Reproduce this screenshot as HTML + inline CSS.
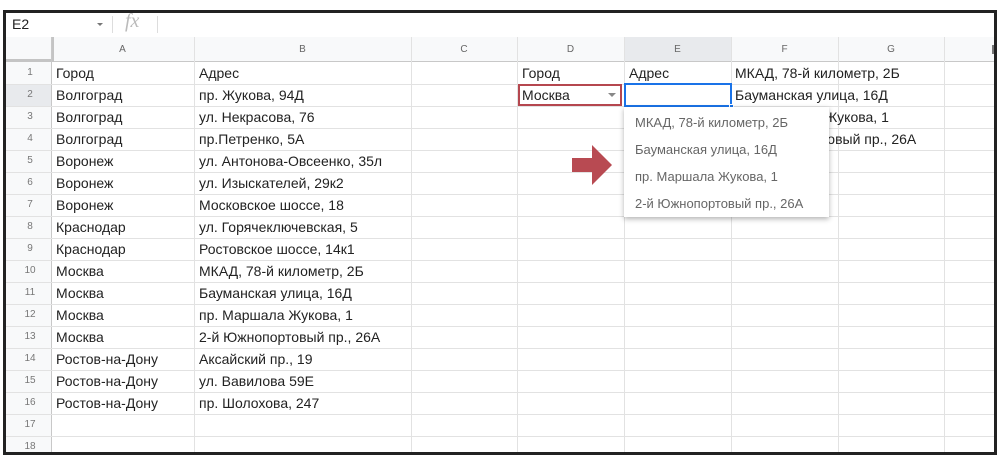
<!DOCTYPE html>
<html><head><meta charset="utf-8"><style>
*{margin:0;padding:0;box-sizing:border-box}
body{width:1000px;height:464px;background:#fff;position:relative;overflow:hidden;font-family:"Liberation Sans",Arial,sans-serif;color:#222}
#frame{position:absolute;left:3px;top:10px;width:994px;height:445px;border:3px solid #222;overflow:hidden;background:#fff}
.a{position:absolute}
.hl{position:absolute;height:1px;background:#e2e2e2}
.vl{position:absolute;width:1px;background:#e2e2e2}
.t{position:absolute;font-size:14px;line-height:22px;white-space:nowrap}
.rn{position:absolute;left:0;width:48px;text-align:center;font-size:10px;color:#777;line-height:22px}
.ch{position:absolute;top:24px;height:25px;font-size:10px;color:#666;text-align:center;line-height:25px}
.dd{position:absolute;font-size:13px;color:#666;left:11px;white-space:nowrap}
</style></head><body>
<div id="frame">
 <!-- formula bar (coords relative to frame: x-6, y-13) -->
 <div class="t" style="left:6px;top:0;font-size:14px;line-height:22px">E2</div>
 <div class="a" style="left:91px;top:10px;width:0;height:0;border-left:3px solid transparent;border-right:3px solid transparent;border-top:3px solid #777"></div>
 <div class="vl" style="left:106px;top:3px;height:17px;background:#ddd"></div>
 <div class="a" style="left:119px;top:-3px;font-family:'Liberation Serif',serif;font-style:italic;font-size:20px;color:#bbb">fx</div>
 <div class="vl" style="left:151px;top:3px;height:17px;background:#ddd"></div>
 <div class="hl" style="left:0;top:24px;width:994px;background:#d0d0d0"></div>
 <!-- header row -->
 <div class="a" style="left:0;top:24px;width:994px;height:25px;background:#f8f9fa"></div>
 <div class="a" style="left:618px;top:24px;width:107px;height:25px;background:#e8eaed"></div>
 <div class="hl" style="left:0;top:48px;width:994px;background:#c8c8c8"></div>
 <div class="a" style="left:0;top:46px;width:48px;height:3px;background:#c4c4c4"></div>
 <div class="a" style="left:45px;top:24px;width:3px;height:25px;background:#c4c4c4"></div>
 <div class="ch" style="left:45px;width:143px">A</div>
 <div class="ch" style="left:188px;width:217px">B</div>
 <div class="ch" style="left:405px;width:106px">C</div>
 <div class="ch" style="left:511px;width:107px">D</div>
 <div class="ch" style="left:618px;width:107px">E</div>
 <div class="ch" style="left:725px;width:107px">F</div>
 <div class="ch" style="left:832px;width:106px">G</div>
 <div class="a" style="left:986px;top:32px;width:3px;height:9px;background:#777"></div>
 <!-- row header bg -->
 <div class="a" style="left:0;top:49px;width:45px;height:400px;background:#f8f9fa"></div>
 <div class="a" style="left:0;top:71px;width:45px;height:22px;background:#e8eaed"></div>
 <!-- vertical lines -->
 <div class="vl" style="left:45px;top:24px;height:420px;background:#c8c8c8"></div>
 <div class="vl" style="left:188px;top:24px;height:420px"></div>
 <div class="vl" style="left:405px;top:24px;height:420px"></div>
 <div class="vl" style="left:511px;top:24px;height:420px"></div>
 <div class="vl" style="left:618px;top:24px;height:420px"></div>
 <div class="vl" style="left:725px;top:24px;height:420px"></div>
 <div class="vl" style="left:832px;top:24px;height:420px"></div>
 <div class="vl" style="left:938px;top:24px;height:420px"></div>
 <!-- horizontal lines -->
 <div class="hl" style="left:0;top:71px;width:994px"></div>
 <div class="hl" style="left:0;top:93px;width:994px"></div>
 <div class="hl" style="left:0;top:115px;width:994px"></div>
 <div class="hl" style="left:0;top:137px;width:994px"></div>
 <div class="hl" style="left:0;top:159px;width:994px"></div>
 <div class="hl" style="left:0;top:181px;width:994px"></div>
 <div class="hl" style="left:0;top:203px;width:994px"></div>
 <div class="hl" style="left:0;top:225px;width:994px"></div>
 <div class="hl" style="left:0;top:247px;width:994px"></div>
 <div class="hl" style="left:0;top:269px;width:994px"></div>
 <div class="hl" style="left:0;top:291px;width:994px"></div>
 <div class="hl" style="left:0;top:313px;width:994px"></div>
 <div class="hl" style="left:0;top:335px;width:994px"></div>
 <div class="hl" style="left:0;top:357px;width:994px"></div>
 <div class="hl" style="left:0;top:379px;width:994px"></div>
 <div class="hl" style="left:0;top:401px;width:994px"></div>
 <div class="hl" style="left:0;top:423px;width:994px"></div>
 <!-- row numbers -->
 <div class="rn" style="top:49px">1</div><div class="rn" style="top:71px">2</div><div class="rn" style="top:93px">3</div><div class="rn" style="top:115px">4</div><div class="rn" style="top:137px">5</div><div class="rn" style="top:159px">6</div><div class="rn" style="top:181px">7</div><div class="rn" style="top:203px">8</div><div class="rn" style="top:225px">9</div><div class="rn" style="top:247px">10</div><div class="rn" style="top:269px">11</div><div class="rn" style="top:291px">12</div><div class="rn" style="top:313px">13</div><div class="rn" style="top:335px">14</div><div class="rn" style="top:357px">15</div><div class="rn" style="top:379px">16</div><div class="rn" style="top:401px">17</div><div class="rn" style="top:423px">18</div>
 <!-- col A -->
 <div class="t" style="left:50px;top:49px">Город</div>
 <div class="t" style="left:50px;top:71px">Волгоград</div>
 <div class="t" style="left:50px;top:93px">Волгоград</div>
 <div class="t" style="left:50px;top:115px">Волгоград</div>
 <div class="t" style="left:50px;top:137px">Воронеж</div>
 <div class="t" style="left:50px;top:159px">Воронеж</div>
 <div class="t" style="left:50px;top:181px">Воронеж</div>
 <div class="t" style="left:50px;top:203px">Краснодар</div>
 <div class="t" style="left:50px;top:225px">Краснодар</div>
 <div class="t" style="left:50px;top:247px">Москва</div>
 <div class="t" style="left:50px;top:269px">Москва</div>
 <div class="t" style="left:50px;top:291px">Москва</div>
 <div class="t" style="left:50px;top:313px">Москва</div>
 <div class="t" style="left:50px;top:335px">Ростов-на-Дону</div>
 <div class="t" style="left:50px;top:357px">Ростов-на-Дону</div>
 <div class="t" style="left:50px;top:379px">Ростов-на-Дону</div>
 <!-- col B -->
 <div class="t" style="left:193px;top:49px">Адрес</div>
 <div class="t" style="left:193px;top:71px">пр. Жукова, 94Д</div>
 <div class="t" style="left:193px;top:93px">ул. Некрасова, 76</div>
 <div class="t" style="left:193px;top:115px">пр.Петренко, 5А</div>
 <div class="t" style="left:193px;top:137px">ул. Антонова-Овсеенко, 35л</div>
 <div class="t" style="left:193px;top:159px">ул. Изыскателей, 29к2</div>
 <div class="t" style="left:193px;top:181px">Московское шоссе, 18</div>
 <div class="t" style="left:193px;top:203px">ул. Горячеключевская, 5</div>
 <div class="t" style="left:193px;top:225px">Ростовское шоссе, 14к1</div>
 <div class="t" style="left:193px;top:247px">МКАД, 78-й километр, 2Б</div>
 <div class="t" style="left:193px;top:269px">Бауманская улица, 16Д</div>
 <div class="t" style="left:193px;top:291px">пр. Маршала Жукова, 1</div>
 <div class="t" style="left:193px;top:313px">2-й Южнопортовый пр., 26А</div>
 <div class="t" style="left:193px;top:335px">Аксайский пр., 19</div>
 <div class="t" style="left:193px;top:357px">ул. Вавилова 59Е</div>
 <div class="t" style="left:193px;top:379px">пр. Шолохова, 247</div>
 <!-- D/E/F -->
 <div class="t" style="left:516px;top:49px">Город</div>
 <div class="t" style="left:623px;top:49px">Адрес</div>
 <div class="t" style="left:729px;top:49px">МКАД, 78-й километр, 2Б</div>
 <div class="t" style="left:729px;top:71px">Бауманская улица, 16Д</div>
 <div class="t" style="left:729px;top:93px">пр. Маршала Жукова, 1</div>
 <div class="t" style="left:729px;top:115px">2-й Южнопортовый пр., 26А</div>
 <div class="a" style="left:512px;top:71px;width:104px;height:22px;border:2px solid #b5474f;background:#fff"></div>
 <div class="t" style="left:516px;top:71px">Москва</div>
 <div class="a" style="left:602px;top:80px;width:0;height:0;border-left:4px solid transparent;border-right:4px solid transparent;border-top:4px solid #888"></div>
 <div class="a" style="left:618px;top:70px;width:108px;height:24px;border:2px solid #1a73e8;background:#fff"></div>
 <div class="a" style="left:723px;top:91px;width:5px;height:5px;background:#1a73e8;border:1px solid #fff"></div>
 <!-- dropdown -->
 <div class="a" style="left:618px;top:94px;width:205px;height:110px;background:#fff;box-shadow:0 2px 5px rgba(0,0,0,.3)">
  <div class="dd" style="top:8px">МКАД, 78-й километр, 2Б</div>
  <div class="dd" style="top:35px">Бауманская улица, 16Д</div>
  <div class="dd" style="top:62px">пр. Маршала Жукова, 1</div>
  <div class="dd" style="top:89px">2-й Южнопортовый пр., 26А</div>
 </div>
 <!-- arrow -->
 <svg class="a" style="left:560px;top:130px" width="50" height="44"><path d="M6 15H26V2L46 22L26 42V29H6Z" fill="#b84a52"/></svg>
</div>
</body></html>
